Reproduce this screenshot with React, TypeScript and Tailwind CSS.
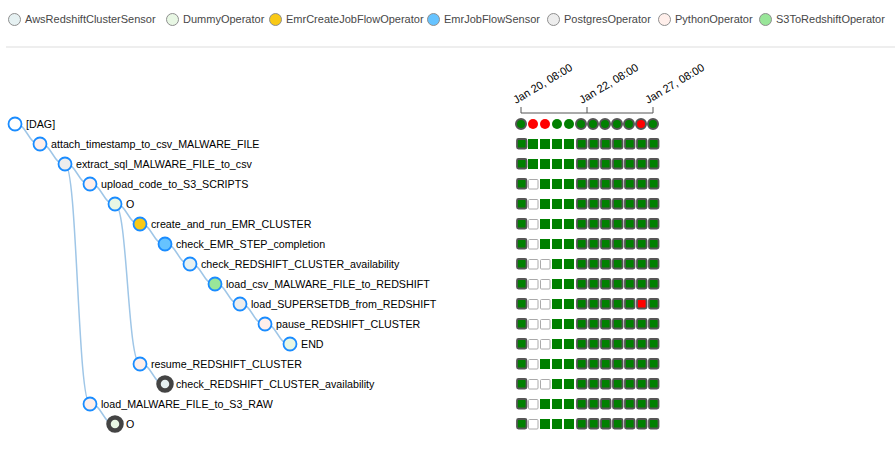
import React from "react";

const legend = [
  { name: "AwsRedshiftClusterSensor", bg: "bg-[#e6f1f2]", w: "w-[132px]" },
  { name: "DummyOperator", bg: "bg-[#e8f7e4]", w: "w-[77px]" },
  { name: "EmrCreateJobFlowOperator", bg: "bg-[#f9c915]", w: "w-[132px]" },
  { name: "EmrJobFlowSensor", bg: "bg-[#66c3ff]", w: "w-[94px]" },
  { name: "PostgresOperator", bg: "bg-[#ededed]", w: "w-[85px]" },
  { name: "PythonOperator", bg: "bg-[#ffefeb]", w: "w-[75px]" },
  { name: "S3ToRedshiftOperator", bg: "bg-[#99e699]", w: "w-[107px]" },
];

type Node = { label: string; depth: number; fill: string; collapsed?: boolean; parent: number; empty: number[]; red?: number[] };

const nodes: Node[] = [
  { label: "[DAG]", depth: 0, fill: "#ffffff", parent: -1, empty: [] },
  { label: "attach_timestamp_to_csv_MALWARE_FILE", depth: 1, fill: "#ffefeb", parent: 0, empty: [] },
  { label: "extract_sql_MALWARE_FILE_to_csv", depth: 2, fill: "#ededed", parent: 1, empty: [] },
  { label: "upload_code_to_S3_SCRIPTS", depth: 3, fill: "#ffefeb", parent: 2, empty: [1] },
  { label: "O", depth: 4, fill: "#e8f7e4", parent: 3, empty: [1] },
  { label: "create_and_run_EMR_CLUSTER", depth: 5, fill: "#f9c915", parent: 4, empty: [1] },
  { label: "check_EMR_STEP_completion", depth: 6, fill: "#66c3ff", parent: 5, empty: [1] },
  { label: "check_REDSHIFT_CLUSTER_availability", depth: 7, fill: "#e6f1f2", parent: 6, empty: [1, 2] },
  { label: "load_csv_MALWARE_FILE_to_REDSHIFT", depth: 8, fill: "#99e699", parent: 7, empty: [1, 2] },
  { label: "load_SUPERSETDB_from_REDSHIFT", depth: 9, fill: "#ededed", parent: 8, empty: [1, 2], red: [10] },
  { label: "pause_REDSHIFT_CLUSTER", depth: 10, fill: "#ffefeb", parent: 9, empty: [1, 2] },
  { label: "END", depth: 11, fill: "#e8f7e4", parent: 10, empty: [1, 2] },
  { label: "resume_REDSHIFT_CLUSTER", depth: 5, fill: "#ffefeb", parent: 4, empty: [1] },
  { label: "check_REDSHIFT_CLUSTER_availability", depth: 6, fill: "#e6f1f2", parent: 12, empty: [1, 2], collapsed: true },
  { label: "load_MALWARE_FILE_to_S3_RAW", depth: 3, fill: "#ffefeb", parent: 2, empty: [1] },
  { label: "O", depth: 4, fill: "#e8f7e4", parent: 14, empty: [1], collapsed: true },
];

const nx = (d: number) => 15 + d * 25;
const ny = (i: number) => 124 + i * 20;
const runColors = ["g", "r", "r", "g", "g", "g", "g", "g", "g", "g", "r", "g"];
const plainCols = [1, 2, 3, 4];

export default function App() {
  return (
    <div className="w-[895px] h-[449px] bg-white overflow-hidden font-['Liberation_Sans',Arial,sans-serif]">
      <div className="h-[46px] pt-[13px] pl-[8px] flex items-start gap-[9px]">
        {legend.map((l) => (
          <div key={l.name} className="flex items-center gap-[4px] h-[13px] shrink-0">
            <span className={`w-[13px] h-[13px] rounded-full border border-[#8f8f8f] shrink-0 ${l.bg}`} />
            <span className={`text-[11px] leading-[13px] text-[#474747] whitespace-nowrap shrink-0 ${l.w}`}>{l.name}</span>
          </div>
        ))}
      </div>
      <div className="h-[2px] bg-[#eeeeee] ml-[6px]" />
      <svg width={895} height={401} className="block">
        <g transform="translate(0,-48)">
          {nodes.map((n, i) => {
            if (n.parent < 0) return null;
            const p = nodes[n.parent];
            const sx = nx(p.depth), sy = ny(n.parent), tx = nx(n.depth), ty = ny(i);
            const mx = (sx + tx) / 2;
            return (
              <path
                key={"l" + i}
                d={`M${sx},${sy}C${mx},${sy} ${mx},${ty} ${tx},${ty}`}
                fill="none"
                stroke="#9fc6e7"
                strokeWidth={1.5}
              />
            );
          })}
          {nodes.map((n, i) => (
            <g key={"n" + i}>
              <circle
                cx={nx(n.depth)}
                cy={ny(i)}
                r={6.5}
                fill={n.fill}
                stroke={n.collapsed ? "#444444" : "#1a8cff"}
                strokeWidth={n.collapsed ? 4.5 : 1.8}
              />
              <text x={nx(n.depth) + 11} y={ny(i) + 4} fontSize="10.7" fill="#000">
                {n.label}
              </text>
            </g>
          ))}
          <path d="M521,107V113H653V107" fill="none" stroke="#555" strokeWidth={1} />
          <line x1={587} y1={107} x2={587} y2={113} stroke="#555" strokeWidth={1} />
          {[
            { x: 516, t: "Jan 20, 08:00" },
            { x: 582, t: "Jan 22, 08:00" },
            { x: 648, t: "Jan 27, 08:00" },
          ].map((d) => (
            <text key={d.t} x={d.x} y={104} fontSize="11" fill="#000" transform={`rotate(-31 ${d.x} 104)`}>
              {d.t}
            </text>
          ))}
          {runColors.map((c, j) => {
            const plain = plainCols.includes(j);
            return (
              <circle
                key={"c" + j}
                cx={521 + 12 * j}
                cy={124}
                r={5}
                fill={c === "r" ? "#ff0000" : "#008000"}
                stroke={plain ? "none" : "#555555"}
                strokeWidth={plain ? 0 : 2}
              />
            );
          })}
          {nodes.slice(1).map((n, k) => {
            const i = k + 1;
            return Array.from({ length: 12 }).map((_, j) => {
              const x = 516 + 12 * j;
              const y = ny(i) - 5;
              if (n.empty.includes(j)) {
                return (
                  <rect key={`s${i}-${j}`} x={x + 0.5} y={y + 0.5} width={9.5} height={9.5} rx={1} fill="#fff" stroke="#aaaaaa" strokeWidth={1} />
                );
              }
              const plain = plainCols.includes(j);
              const red = n.red?.includes(j);
              return (
                <rect
                  key={`s${i}-${j}`}
                  x={plain ? x : x + 1}
                  y={y}
                  width={plain ? 10 : 9.5}
                  height={plain ? 10 : 9.5}
                  rx={plain ? 0 : 1.5}
                  fill={red ? "#ff0000" : "#008000"}
                  stroke={plain ? "none" : "#555555"}
                  strokeWidth={plain ? 0 : 1.8}
                />
              );
            });
          })}
        </g>
      </svg>
    </div>
  );
}
